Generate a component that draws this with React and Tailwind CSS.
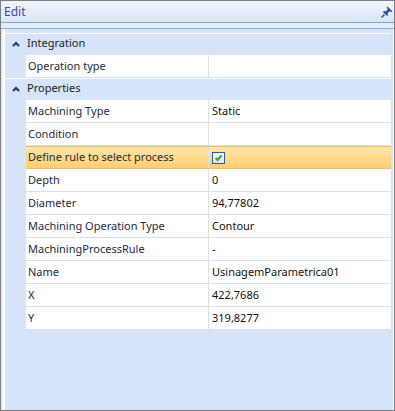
import React from 'react';

const groups = [
  {
    title: 'Integration',
    rows: [{ label: 'Operation type', value: '' }],
  },
  {
    title: 'Properties',
    rows: [
      { label: 'Machining Type', value: 'Static' },
      { label: 'Condition', value: '' },
      { label: 'Define rule to select process', check: true, active: true },
      { label: 'Depth', value: '0' },
      { label: 'Diameter', value: '94,77802' },
      { label: 'Machining Operation Type', value: 'Contour' },
      { label: 'MachiningProcessRule', value: '-' },
      { label: 'Name', value: 'UsinagemParametrica01' },
      { label: 'X', value: '422,7686' },
      { label: 'Y', value: '319,8277' },
    ],
  },
];

function Chevron() {
  return (
    <svg width="8" height="6" viewBox="0 0 8 6" className="block">
      <path d="M1 5 L4 2 L7 5" fill="none" stroke="#1f3565" strokeWidth="2" />
    </svg>
  );
}

function Pin() {
  return (
    <svg width="12" height="12" viewBox="0 0 11 11" className="block">
      <path d="M6 0.5 L10.5 5 L9.3 5.6 L7.8 4.8 L6 6.6 L6.4 8.6 L5.6 9.2 L1.8 5.4 L2.4 4.6 L4.4 5 L6.2 3.2 L5.4 1.7 Z" fill="#1f4c9c" />
      <path d="M3.2 7.8 L0.5 10.5" stroke="#1f4c9c" strokeWidth="1.4" />
    </svg>
  );
}

function CheckBox() {
  return (
    <div className="w-[13px] h-[12px] border border-[#2f5c96] bg-gradient-to-b from-[#f4f7fb] to-[#dfe7f1] flex items-center justify-center">
      <svg width="9" height="8" viewBox="0 0 9 8">
        <path d="M1.5 4 L3.6 6 L7.5 1.5" fill="none" stroke="#3aa53a" strokeWidth="2" />
      </svg>
    </div>
  );
}

export default function App() {
  return (
    <div
      className="w-[395px] h-[411px] border border-[#7d7d7d] flex flex-col bg-[#eef1f5] overflow-hidden"
      style={{ fontFamily: '"Noto Sans", "Open Sans", sans-serif' }}
    >
      {/* title bar */}
      <div className="h-[21px] flex items-center justify-between pl-[3px] pr-[1px] bg-gradient-to-b from-[#f1f5fb] to-[#dbe6f5]">
        <span className="text-[12px] text-[#3c4a9c] leading-none">Edit</span>
        <Pin />
      </div>
      <div className="h-[1px] bg-[#7ea5d8]" />
      <div className="h-[5px] bg-[#e4ecf8]" />
      <div className="h-[1px] bg-[#8aafdd]" />

      {/* grid body */}
      <div className="flex-1 flex">
        <div className="w-[2px] bg-[#e9ecf0]" />
        <div className="w-[2px] bg-white" />
        <div className="flex-1 bg-[#d5e4f8] pt-[4px] pr-[2px] pl-[1px]">
          {groups.map((g) => (
            <div key={g.title}>
              <div className="h-[22px] border-t border-white flex items-center pb-[2px]">
                <div className="w-[20px] flex justify-center">
                  <Chevron />
                </div>
                <span className="text-[11px] text-[#1b1b1b] ml-[1px]">{g.title}</span>
              </div>
              {g.rows.map((r) => (
                <div key={r.label} className="flex h-[23px] pl-[20px]">
                  <div
                    className={
                      r.active
                        ? 'flex-1 flex border-y border-[#f6bc67] bg-gradient-to-b from-[#fee6a6] to-[#fdcd70]'
                        : 'flex-1 flex border-b border-[#d5e0f0] bg-white'
                    }
                  >
                    <div className="w-[183px] border-r border-[#d5e0f0] flex items-center pl-[2px] text-[11px] text-[#1d2a40] whitespace-nowrap">
                      {r.label}
                    </div>
                    <div className="flex-1 flex items-center pl-[3px] text-[11px] text-[#111]">
                      {r.check ? <CheckBox /> : r.value}
                    </div>
                  </div>
                </div>
              ))}
            </div>
          ))}
        </div>
        <div className="w-[1px] bg-white" />
      </div>
    </div>
  );
}
